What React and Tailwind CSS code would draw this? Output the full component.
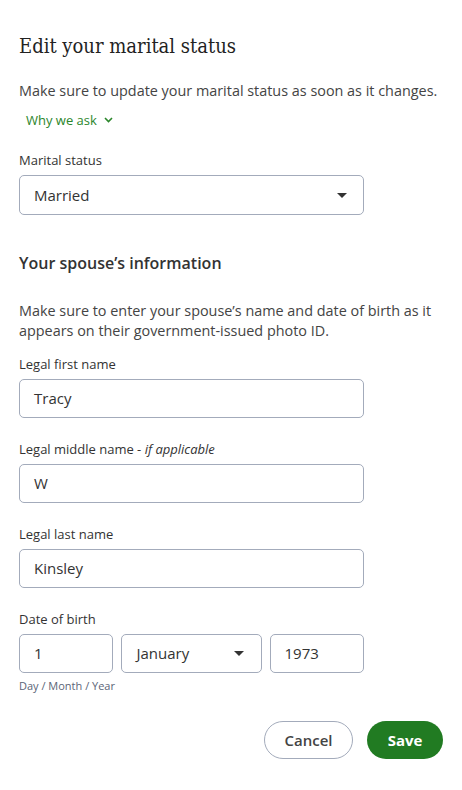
import React from "react";

const Caret = () => (
  <svg width="10" height="5" viewBox="0 0 10 5" className="shrink-0">
    <path d="M0 0h10L5 5z" fill="#333" />
  </svg>
);

const Field = ({ label, value }) => (
  <div className="mt-[22px]">
    <div className="text-[13px] leading-[18px] text-[#333]">{label}</div>
    <div className="mt-[6px] flex h-[39px] w-[345px] items-center rounded-[5px] border border-[#a3abbb] px-[14px] text-[15px] text-[#333]">
      {value}
    </div>
  </div>
);

export default function App() {
  return (
    <div
      className="min-h-[790px] w-[462px] bg-white px-[19px] pt-[33px] text-[#333]"
      style={{ fontFamily: '"Open Sans", "Noto Sans", sans-serif' }}
    >
      <h1
        className="text-[20px] leading-[26px] text-[#222]"
        style={{ fontFamily: '"DejaVu Serif Condensed", "Liberation Serif", serif' }}
      >
        Edit your marital status
      </h1>

      <p className="mt-[22px] text-[14.4px] leading-[20px] text-[#444]">
        Make sure to update your marital status as soon as it changes.
      </p>
      <button className="mt-[10px] ml-[7px] flex items-center gap-[7px] text-[13px] leading-[18px] text-[#2b862b]">
        Why we ask
        <svg width="9" height="6" viewBox="0 0 9 6">
          <path d="M1 1l3.5 3.5L8 1" fill="none" stroke="#2b862b" strokeWidth="1.6" />
        </svg>
      </button>

      <div className="mt-[22px]">
        <div className="text-[13px] leading-[18px] text-[#333]">Marital status</div>
        <div className="mt-[6px] flex h-[40px] w-[345px] items-center justify-between rounded-[5px] border border-[#a3abbb] pl-[14px] pr-[16px] text-[15px] text-[#333]">
          <span>Married</span>
          <Caret />
        </div>
      </div>

      <h2 className="mt-[37px] text-[16px] leading-[22px] font-semibold text-[#333]">
        Your spouse’s information
      </h2>
      <p className="mt-[27px] text-[14.4px] leading-[20px] text-[#444]">
        Make sure to enter your spouse’s name and date of birth as it appears on their
        government-issued photo ID.
      </p>

      <div className="mt-[-8px]">
        <Field label="Legal first name" value="Tracy" />
      </div>
      <Field
        label={
          <>
            Legal middle name - <i>if applicable</i>
          </>
        }
        value="W"
      />
      <Field label="Legal last name" value="Kinsley" />

      <div className="mt-[22px]">
        <div className="text-[13px] leading-[18px] text-[#333]">Date of birth</div>
        <div className="mt-[6px] flex w-[345px] gap-[8px] text-[15px] text-[#333]">
          <div className="flex h-[39px] w-[95px] items-center rounded-[5px] border border-[#a3abbb] px-[14px]">
            1
          </div>
          <div className="flex h-[39px] w-[141px] items-center justify-between rounded-[5px] border border-[#a3abbb] pl-[14px] pr-[17px]">
            <span>January</span>
            <Caret />
          </div>
          <div className="flex h-[39px] w-[95px] items-center rounded-[5px] border border-[#a3abbb] px-[14px]">
            1973
          </div>
        </div>
        <div className="mt-[5px] text-[11px] leading-[16px] text-[#5b6577]">Day / Month / Year</div>
      </div>

      <div className="mt-[27px] flex justify-end gap-[14px]">
        <button className="h-[38px] w-[89px] rounded-full border border-[#a3abbb] text-[15px] font-semibold text-[#444]">
          Cancel
        </button>
        <button className="h-[38px] w-[76px] rounded-full bg-[#217b22] text-[15px] font-bold text-white">
          Save
        </button>
      </div>
    </div>
  );
}
